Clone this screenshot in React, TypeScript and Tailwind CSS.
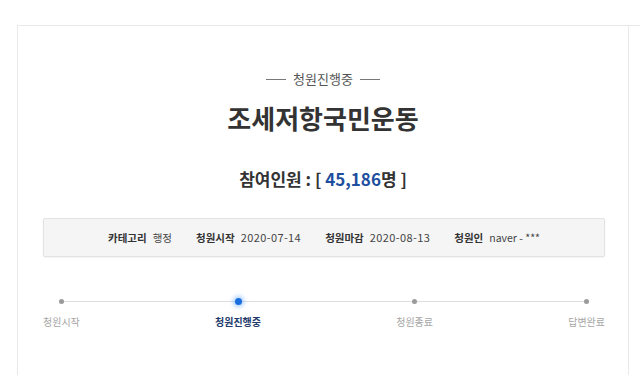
import React from 'react';

const FONT = { fontFamily: '"Noto Sans CJK KR", "Noto Sans", sans-serif' };

interface InfoItem {
  label: string;
  value: string;
  wide?: boolean;
}

interface Step {
  name: string;
  active?: boolean;
}

const info: InfoItem[] = [
  { label: '카테고리', value: '행정' },
  { label: '청원시작', value: '2020-07-14', wide: true },
  { label: '청원마감', value: '2020-08-13', wide: true },
  { label: '청원인', value: 'naver - ***' },
];

const steps: Step[] = [
  { name: '청원시작' },
  { name: '청원진행중', active: true },
  { name: '청원종료' },
  { name: '답변완료' },
];

const App: React.FC = () => {
  return (
    <div className="w-[640px] h-[375px] overflow-hidden bg-white" style={FONT}>
      <div className="mt-[25px] ml-[17px] border-t border-l border-[#e9e9e9] h-[400px]">
        <div className="w-[611px] h-full border-r border-[#e9e9e9] flex flex-col items-center pt-[45px]">
          {/* status */}
          <div className="flex items-center gap-[7px] text-[13px] leading-4 text-[#555]">
            <span className="w-[20px] h-px bg-[#777]" />
            <span>청원진행중</span>
            <span className="w-[20px] h-px bg-[#777]" />
          </div>

          <h1 className="mt-[15px] text-[26px] leading-[32px] font-bold text-[#333]">
            조세저항국민운동
          </h1>

          <p className="mt-[33px] text-[17px] leading-6 font-bold text-[#333]">
            참여인원 : [ <span className="text-[#1d4f9e]">45,186</span>명 ]
          </p>

          <div className="w-full pl-[25px] pr-[23px]">
            {/* info box */}
            <div className="mt-[27px] h-[39px] rounded-[2px] border border-[#e2e2e2] bg-[#f5f5f5] shadow-[0_1px_2px_rgba(0,0,0,0.05)] flex items-center justify-center gap-[24px] text-[#444]">
              {info.map((it) => (
                <div key={it.label} className="flex items-center gap-[6px]">
                  <span className="text-[10.5px] font-bold text-[#333]">{it.label}</span>
                  <span className={it.wide ? 'text-[11px] tracking-[0.4px]' : 'text-[10.5px]'}>{it.value}</span>
                </div>
              ))}
            </div>

            {/* progress */}
            <div className="relative mt-[40px] flex justify-between">
              <div className="absolute left-[19px] right-[18px] top-[4px] h-px bg-[#dedede]" />
              {steps.map((s) => (
                <div key={s.name} className="relative flex flex-col items-center">
                  <div className="h-2 flex items-center justify-center">
                    {s.active ? (
                      <span className="w-[7px] h-[7px] rounded-full bg-[#1a6fe0] shadow-[0_0_4px_2px_rgba(70,150,255,0.45)]" />
                    ) : (
                      <span className="w-[5px] h-[5px] rounded-full bg-[#9a9a9a]" />
                    )}
                  </div>
                  <span
                    className={
                      s.active
                        ? 'mt-[10px] text-[10px] leading-[14px] font-bold text-[#243c6c]'
                        : 'mt-[10px] text-[10px] leading-[14px] text-[#a5a5a5]'
                    }
                  >
                    {s.name}
                  </span>
                </div>
              ))}
            </div>
          </div>
        </div>
      </div>
    </div>
  );
};

export default App;
